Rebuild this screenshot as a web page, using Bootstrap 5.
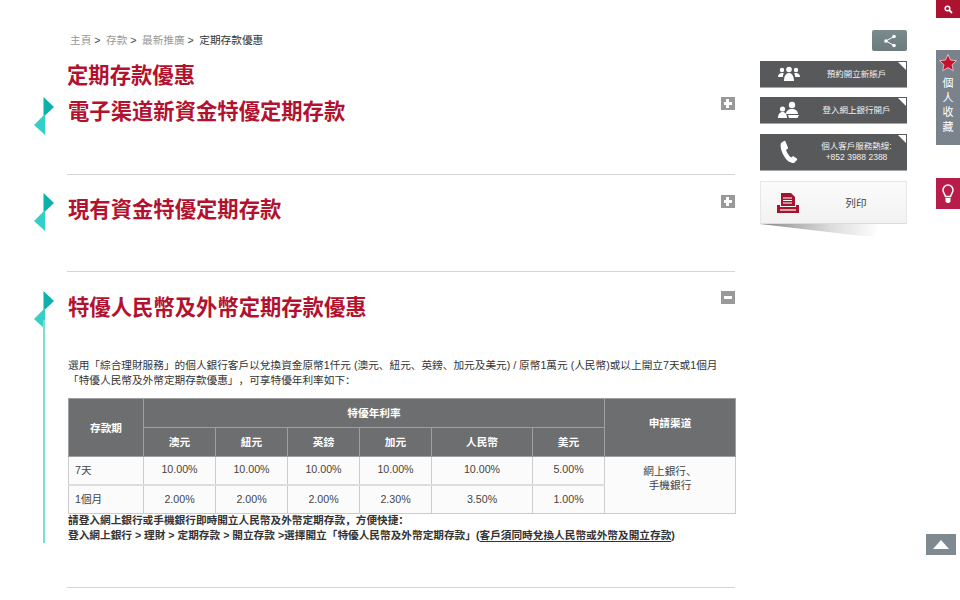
<!DOCTYPE html>
<html>
<head>
  <meta charset="UTF-8" />
  <title>定期存款優惠</title>
  <link href="https://cdn.jsdelivr.net/npm/bootstrap@5.3.0/dist/css/bootstrap.min.css" rel="stylesheet" />
  <style>
    html, body { height: 600px; overflow: hidden; }
    body {
      background: #fff;
      color: #404040;
      font-family: "Liberation Sans", "Noto Sans CJK SC", sans-serif;
      font-size: 8pt;
      line-height: 16px;
      text-spacing-trim: space-all;
    }
    .page-wrap { padding: 30px 0 0 67px; width: 907px; gap: 25px; }
    .main-col { width: 668px; flex: none; }
    .side-col { width: 147px; flex: none; }

    .crumbs { font-size: 8pt; line-height: 20px; padding: 0 0 0 3px; color: #333; margin: 0; }
    .crumbs span { color: #999; }
    .crumbs i { font-style: normal; color: #444; margin: 0 2.500px 0 0; }
    .page-title { color: #b3122f; font-size: 16pt; line-height: 28px; font-weight: 700; margin: 12px 0 0; }

    .fold-sec { position: relative; border-bottom: 1px solid #d5d5d5; }
    .fold-one { height: 85px; }
    .fold-two { height: 97px; }
    .fold-three { height: 316px; }
    .fold-title { color: #b3122f; font-size: 16pt; line-height: 28px; font-weight: 700; margin: 0; padding-left: 1px; }
    .fold-one .fold-title { padding-top: 8px; }
    .fold-two .fold-title { padding-top: 21px; }
    .fold-three .fold-title { padding-top: 22px; }
    .fold-flag { position: absolute; left: -33px; width: 20px; height: 38px; }
    .fold-one .fold-flag { top: 7px; }
    .fold-two .fold-flag { top: 18px; }
    .fold-three .fold-flag { top: 19px; }
    .fold-btn { position: absolute; right: 0; width: 14px; height: 13px; background: #999; }
    .fold-one .fold-btn { top: 7px; }
    .fold-two .fold-btn { top: 20px; }
    .fold-three .fold-btn { top: 19px; }
    .fold-btn::before { content: ""; position: absolute; left: 3px; top: 5px; width: 8px; height: 3px; background: #fff; }
    .fold-btn.is-plus::after { content: ""; position: absolute; left: 5px; top: 2px; width: 3px; height: 9px; background: #fff; }
    .fold-line { position: absolute; left: -24px; top: 48px; width: 2px; height: 223px; background: #7adcd6; }

    .fold-text { margin: 36px 0 10px 1px; line-height: 15px; color: #333; }
    .rate-table { width: 667px; margin: 0 0 0 1px; table-layout: fixed; border-collapse: collapse; font-size: 8pt; }
    .rate-table th, .rate-table td { text-align: center; vertical-align: middle; padding: 0; line-height: 14px; }
    .rate-table th { background: #6d6e70; color: #fff; border: 1px solid #a0a0a0; height: 29px; font-weight: 700; }
    .rate-table td { background: #fbfbfb; color: #444; border: 1px solid #ccc; height: 28px; }
    .rate-table tr.row-last td { border-top: 2px solid #ddd; height: 29px; }
    .rate-table td.row-name { text-align: left; padding-left: 6px; }
    .rate-table td.col-val { padding-bottom: 3px; }
    .rate-table td.col-way { vertical-align: top; padding-top: 7px; }
    .rate-table th.col-way-head { padding-bottom: 10px; }
    .col-a { width: 75px; }
    .col-b { width: 72px; }
    .col-c { width: 101px; }
    .col-d { width: 131px; }
    .fold-note { margin: -1px 0 0 1px; font-weight: 700; line-height: 15px; color: #333; }
    .fold-note u { text-underline-offset: 2px; }

    .share-btn { width: 35px; height: 21px; margin-left: auto; border-radius: 2px; background: linear-gradient(#7b8a8d, #6b7b7e); }
    .side-link {
      position: relative; width: 147px; height: 27px; background: #58595b; color: #f0f0f0;
      border-bottom: 1px solid #a5a5a5; font-size: 8.500px; line-height: 11px; text-align: center;
      padding-left: 17px;
    }
    .side-link::after { content: ""; position: absolute; top: 1px; right: 1px; border-style: solid; border-width: 0 8px 8px 0; border-color: transparent #fff transparent transparent; }
    .side-link svg { flex: none; width: 24px; margin-right: 5px; }
    .side-tall { height: 37px; }
    .side-link-text { flex: 1; }
    .gap-one { margin-top: 10px; }
    .gap-two { margin-top: 9px; }
    .print-box {
      width: 147px; height: 43px; background: linear-gradient(#fbfbfb, #f2f2f2);
      border: 1px solid #e6e6e6; border-bottom-color: #ddd; color: #444; padding-left: 16px;
    }
    .print-box svg { flex: none; margin-right: 7px; }
    .print-box span { flex: 1; text-align: center; }
    .print-shade {
      width: 120px; height: 12px; clip-path: polygon(0 0, 100% 0, 95% 100%, 85% 100%);
      background: linear-gradient(90deg, #888, #ddd 60%, #fff);
    }

    .rail-tab { position: fixed; background: #7a838c; color: #fff; }
    .rail-find { left: 936px; top: 0; width: 24px; height: 18px; background: #ad1230; }
    .rail-fav { left: 936px; top: 50px; width: 24px; height: 95px; font-size: 11px; line-height: 14.500px; text-align: center; padding-top: 4px; }
    .rail-fav svg { display: block; margin: 0 auto 5px; }
    .rail-tip { left: 936px; top: 178px; width: 24px; height: 31px; background: #b81c4a; }
    .rail-top { left: 926px; top: 534px; width: 30px; height: 21px; background: #7f8a90; }
  </style>
</head>
<body>

<div class="page-wrap d-flex">
  <div class="main-col">
    <p class="crumbs"><span>主頁</span> <i>&gt;</i> <span>存款</span> <i>&gt;</i> <span>最新推廣</span> <i>&gt;</i> 定期存款優惠</p>
    <h1 class="page-title">定期存款優惠</h1>

    <section class="fold-sec fold-one">
      <svg class="fold-flag" viewBox="0 0 20 38"><path d="M9.500 0L20 10 9.500 20z" fill="#0db0ab"/><path d="M11 17v21L0 28z" fill="#36cfc5"/></svg>
      <h2 class="fold-title">電子渠道新資金特優定期存款</h2>
      <span class="fold-btn is-plus"></span>
    </section>

    <section class="fold-sec fold-two">
      <svg class="fold-flag" viewBox="0 0 20 38"><path d="M9.500 0L20 10 9.500 20z" fill="#0db0ab"/><path d="M11 17v21L0 28z" fill="#36cfc5"/></svg>
      <h2 class="fold-title">現有資金特優定期存款</h2>
      <span class="fold-btn is-plus"></span>
    </section>

    <section class="fold-sec fold-three">
      <svg class="fold-flag" viewBox="0 0 20 38"><path d="M9.500 0L20 10 9.500 20z" fill="#0db0ab"/><path d="M11 17v21L0 28z" fill="#36cfc5"/></svg>
      <span class="fold-line"></span>
      <h2 class="fold-title">特優人民幣及外幣定期存款優惠</h2>
      <span class="fold-btn"></span>
      <p class="fold-text">選用「綜合理財服務」的個人銀行客戶以兌換資金原幣1仟元 (澳元、紐元、英鎊、加元及美元) / 原幣1萬元 (人民幣)或以上開立7天或1個月<br />「特優人民幣及外幣定期存款優惠」，可享特優年利率如下：</p>
      <table class="rate-table">
        <colgroup>
          <col class="col-a" /><col class="col-b" /><col class="col-b" /><col class="col-b" /><col class="col-b" /><col class="col-c" /><col class="col-b" /><col class="col-d" />
        </colgroup>
        <tr>
          <th rowspan="2">存款期</th>
          <th colspan="6">特優年利率</th>
          <th rowspan="2" class="col-way-head">申請渠道</th>
        </tr>
        <tr><th>澳元</th><th>紐元</th><th>英鎊</th><th>加元</th><th>人民幣</th><th>美元</th></tr>
        <tr>
          <td class="row-name">7天</td>
          <td class="col-val">10.00%</td><td class="col-val">10.00%</td><td class="col-val">10.00%</td><td class="col-val">10.00%</td><td class="col-val">10.00%</td><td class="col-val">5.00%</td>
          <td rowspan="2" class="col-way">網上銀行、<br />手機銀行</td>
        </tr>
        <tr class="row-last">
          <td class="row-name">1個月</td>
          <td>2.00%</td><td>2.00%</td><td>2.00%</td><td>2.30%</td><td>3.50%</td><td>1.00%</td>
        </tr>
      </table>
      <p class="fold-note">請登入網上銀行或手機銀行即時開立人民幣及外幣定期存款，方便快捷：<br />登入網上銀行 &gt; 理財 &gt; 定期存款 &gt; 開立存款 &gt;選擇開立「特優人民幣及外幣定期存款」(<u>客戶須同時兌換人民幣或外幣及開立存款</u>)</p>
    </section>
  </div>

  <aside class="side-col d-flex flex-column">
    <div class="share-btn d-flex align-items-center justify-content-center">
      <svg width="14" height="14" viewBox="0 0 14 14"><path d="M11 2.500L3 7l8 4.500" fill="none" stroke="#fff" stroke-width="1"/><circle cx="11" cy="2.500" r="1.800" fill="#fff"/><circle cx="3" cy="7" r="1.800" fill="#fff"/><circle cx="11" cy="11.500" r="1.800" fill="#fff"/></svg>
    </div>
    <a class="side-link gap-one d-flex align-items-center text-decoration-none" href="#">
      <svg height="16" viewBox="0 0 24 16" fill="#fff"><circle cx="5" cy="4" r="2.200"/><circle cx="12" cy="3.500" r="2.800"/><circle cx="19" cy="4" r="2.200"/><path d="M1 11c0-3 2-4 4-4 1 0 1.500.3 2 .6-.8 1-1.200 2-1.200 3.400H1zM23 11c0-3-2-4-4-4-1 0-1.500.3-2 .6.800 1 1.200 2 1.200 3.400H23zM7 15c0-5 2-8 5-8s5 3 5 8z"/></svg>
      <span class="side-link-text">預約開立新賬戶</span>
    </a>
    <a class="side-link gap-two d-flex align-items-center text-decoration-none" href="#">
      <svg height="18" viewBox="0 0 24 18" fill="#fff"><circle cx="5.500" cy="8" r="2.600"/><path d="M1 17c0-4 2-6 4.500-6S10 13 10 17z"/><circle cx="15" cy="4" r="3.200"/><path d="M9 13c0-3 2.500-5 6-5s6 2 6 5zM11 14h11l-1.500 3H12z"/></svg>
      <span class="side-link-text">登入網上銀行開戶</span>
    </a>
    <a class="side-link side-tall gap-one d-flex align-items-center text-decoration-none" href="#">
      <svg height="24" viewBox="0 0 24 24" fill="#fff"><path d="M7 1L4 3c-1 3 0 8 3 13s6 7 10 7l3-3c.4-.5.3-1-.2-1.400l-3-2.200c-.5-.3-1-.2-1.400.2l-1 1c-1.500-.8-3-2.700-4.200-4.800-.6-1.300-1-2.300-1.200-3l1.500-.7c.5-.3.700-.8.500-1.300L8.500 1.500C8.200.9 7.600.7 7 1z"/></svg>
      <span class="side-link-text">個人客戶服務熱線:<br />+852 3988 2388</span>
    </a>
    <div class="print-box gap-one d-flex align-items-center">
      <svg width="22" height="20" viewBox="0 0 22 20"><path d="M4 0h10l4 4v9H4z" fill="#a3142e"/><path d="M6 5h9M6 7.500h9M6 10h9" stroke="#fff" stroke-width="1"/><path d="M0 12h3v2h16v-2h3v8H0z" fill="#a3142e"/><rect x="3" y="16" width="16" height="2" fill="#d9a0aa"/></svg>
      <span>列印</span>
    </div>
    <div class="print-shade"></div>
  </aside>
</div>

<a class="rail-tab rail-find d-flex align-items-center justify-content-center" href="#">
  <svg width="9" height="9" viewBox="0 0 9 9"><circle cx="3.500" cy="3.500" r="2.300" fill="none" stroke="#fff" stroke-width="1.500"/><path d="M5.200 5.200L8 8" stroke="#fff" stroke-width="1.800"/></svg>
</a>
<div class="rail-tab rail-fav">
  <svg width="18" height="17" viewBox="0 0 18 17"><path d="M9 .5l2.500 5.600 6 .6-4.500 4 1.300 6L9 13.600l-5.300 3.100L5 10.700l-4.500-4 6-.6z" fill="#c8102e" stroke="#fff" stroke-width=".6"/></svg>
  個<br />人<br />收<br />藏
</div>
<div class="rail-tab rail-tip d-flex align-items-center justify-content-center">
  <svg width="12" height="20" viewBox="0 0 12 20"><path d="M3.500 12.500C3 10 1 9 1 6a5 5 0 0 1 10 0c0 3-2 4-2.500 6.500z" fill="none" stroke="#fff" stroke-width="1.500"/><path d="M3.500 14h5v3.500L7 19H5l-1.500-1.500z" fill="#fff"/></svg>
</div>
<div class="rail-tab rail-top d-flex align-items-center justify-content-center">
  <svg width="16" height="9" viewBox="0 0 16 9"><path d="M8 0l8 9H0z" fill="#fff"/></svg>
</div>

<script src="https://cdn.jsdelivr.net/npm/bootstrap@5.3.0/dist/js/bootstrap.bundle.min.js"></script>
</body>
</html>
